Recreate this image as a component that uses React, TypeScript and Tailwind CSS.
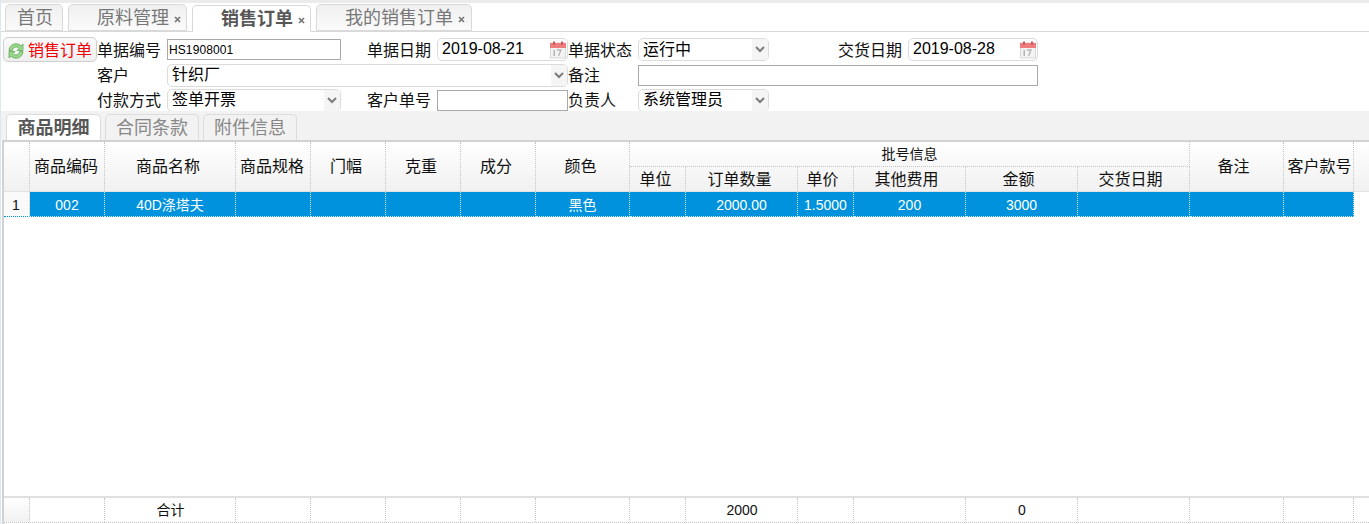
const FONT = "font-['Liberation_Sans','Noto_Sans_CJK_SC',sans-serif]";

function Close({ ml }: { ml: string }) {
  return (
    <svg width="7" height="7" viewBox="0 0 7 7" className={`mt-0.5 shrink-0 ${ml}`}>
      <path d="M1 1l5 5M6 1L1 6" stroke="#777" strokeWidth="1.7" />
    </svg>
  );
}

function Tab({ label, active, closeMl, w, pl, mr }: { label: string; active?: boolean; closeMl?: string; w: string; pl: string; mr: string }) {
  return (
    <div
      className={`flex h-[27px] items-center rounded-t-[5px] border border-[#d9d9d9] pt-0.5 text-[18px] ${w} ${pl} ${mr} ${
        active ? "-mb-px border-b-white bg-white font-bold text-[#575757]" : "bg-gradient-to-b from-[#f0f0f0] to-[#fafafa] text-[#777]"
      }`}
    >
      <span className="whitespace-nowrap">{label}</span>
      {closeMl && <Close ml={closeMl} />}
    </div>
  );
}

function Calendar() {
  return (
    <svg width="16" height="18" viewBox="0 0 16 18" className="shrink-0">
      <rect x="0.5" y="2" width="15" height="15" fill="#f3f3f3" stroke="#d8d8d8" />
      <rect x="0" y="2" width="16" height="5" fill="#ee7d7d" />
      <rect x="3" y="0.5" width="2" height="3.5" fill="#cc5a5a" />
      <rect x="11" y="0.5" width="2" height="3.5" fill="#cc5a5a" />
      <rect x="3.5" y="9" width="1.5" height="6" fill="#b5b5b5" />
      <path d="M7 9h4l-2.5 6" stroke="#b5b5b5" strokeWidth="1.3" fill="none" />
    </svg>
  );
}

function DateBox({ value }: { value: string }) {
  return (
    <div className="flex h-[23px] items-center justify-between self-center rounded-[5px] border border-[#dcdcdc] bg-white pl-1 pr-px text-[16px] text-black">
      <span className="-mt-0.5">{value}</span>
      <Calendar />
    </div>
  );
}

function SelectBox({ value, className = "" }: { value: string; className?: string }) {
  return (
    <div className={`flex h-[23px] items-center justify-between self-center overflow-hidden rounded-[5px] border border-[#dcdcdc] bg-white pl-1 text-[16px] text-black ${className}`}>
      <span>{value}</span>
      <div className="flex h-full w-4 items-center justify-center bg-[#f5f5f5]">
        <svg width="10" height="7" viewBox="0 0 10 7">
          <path d="M1 1l4 4 4-4" stroke="#7c7c7c" strokeWidth="2" fill="none" />
        </svg>
      </div>
    </div>
  );
}

function TextBox({ value = "", className = "" }: { value?: string; className?: string }) {
  return (
    <div className={`flex h-[21px] items-center self-center border border-[#a9a9a9] bg-white pl-px text-[12px] tracking-[0.1px] text-black ${className}`}>
      {value}
    </div>
  );
}

function Label({ children, right }: { children: string; right?: boolean }) {
  return <div className={`self-center whitespace-nowrap pt-0.5 text-[16px] text-[#111] ${right ? "pr-1.5 text-right" : ""}`}>{children}</div>;
}

function Refresh() {
  return (
    <svg width="16" height="16" viewBox="0 0 16 16" className="shrink-0">
      <path d="M1 7.5C1.3 3.2 4.500 0.800 8 0.800c2.300 0 3.900.9 4.900 2.200L15 1V7.500H9l2-2C10.300 4.600 9.300 4 8 4 6 4 4.700 5.400 4.300 7.500Z" fill="#9ad68b" stroke="#5fa955" strokeWidth="0.8" />
      <path d="M15 8.500C14.700 12.800 11.500 15.200 8 15.200c-2.300 0-3.900-.9-4.900-2.200L1 15V8.500h6l-2 2C5.700 11.400 6.700 12 8 12c2 0 3.300-1.400 3.700-3.500Z" fill="#9ad68b" stroke="#5fa955" strokeWidth="0.8" />
    </svg>
  );
}

const GRID = "grid grid-cols-[26px_75px_131px_75px_75px_75px_75px_94px_56px_112px_56px_112px_112px_112px_94px_70px_1fr]";
const cell = "border-r border-dotted border-[#c4c4c4]";

function Head({ children, className = "" }: { children?: string; className?: string }) {
  return <div className={`flex items-center justify-center whitespace-nowrap ${cell} ${className}`}>{children}</div>;
}

const rowValues = ["002", "40D涤塔夫", "", "", "", "", "黑色", "", "2000.00", "1.5000", "200", "3000", "", "", ""];
const footValues = ["", "合计", "", "", "", "", "", "", "2000", "", "", "0", "", "", ""];

export default function App() {
  return (
    <div className={`flex h-[524px] w-[1369px] flex-col overflow-hidden border-l border-[#dbe7f1] bg-white ${FONT}`}>
      <div className="h-[3px] shrink-0 bg-[#ebebeb]" />
      <div className="flex h-[29px] shrink-0 items-end border-b border-[#d9d9d9] pl-[4px]">
        <Tab label="首页" w="w-[58px]" pl="pl-[11px]" mr="mr-[5px]" />
        <Tab label="原料管理" closeMl="ml-[5px]" w="w-[119px]" pl="pl-[28px]" mr="mr-[5px]" />
        <Tab label="销售订单" closeMl="ml-[5px]" active w="w-[119px]" pl="pl-[28px]" mr="mr-[5px]" />
        <Tab label="我的销售订单" closeMl="ml-[5px]" w="w-[156px]" pl="pl-[28px]" mr="" />
      </div>

      <div className="grid h-[79px] shrink-0 grid-cols-[95px_70px_174px_96px_131px_70px_131px_139px_130px] grid-rows-[25px_26px_24px] items-center pl-px pt-[5px]">
        <div className="ml-px flex h-[25px] items-center gap-[4px] self-start rounded-[5px] border border-[#cfcfcf] bg-gradient-to-b from-[#fbfbfb] to-[#efefef] pl-[4px] pt-0.5 text-[16px] text-[#f00000]">
          <Refresh />
          <span className="whitespace-nowrap">销售订单</span>
        </div>
        <Label>单据编号</Label>
        <TextBox value="HS1908001" />
        <Label right>单据日期</Label>
        <DateBox value="2019-08-21" />
        <Label>单据状态</Label>
        <SelectBox value="运行中" />
        <Label right>交货日期</Label>
        <DateBox value="2019-08-28" />

        <div />
        <Label>客户</Label>
        <SelectBox value="针织厂" className="col-span-3" />
        <Label>备注</Label>
        <TextBox className="col-span-3" />

        <div />
        <Label>付款方式</Label>
        <SelectBox value="签单开票" />
        <Label right>客户单号</Label>
        <TextBox />
        <Label>负责人</Label>
        <SelectBox value="系统管理员" />
      </div>

      <div className="flex h-[29px] shrink-0 items-end bg-[#f2f2f2] pl-[5px]">
        <div className="flex h-[26px] w-[95px] items-center justify-center rounded-t-[5px] border border-b-0 border-[#dcdcdc] bg-white pt-0.5 text-[18px] font-bold text-[#575757]">商品明细</div>
        <div className="ml-[4px] flex h-[26px] w-[94px] items-center justify-center rounded-t-[5px] border border-b-0 border-[#dcdcdc] bg-[#f2f2f2] pt-0.5 text-[18px] text-[#888]">合同条款</div>
        <div className="ml-[4px] flex h-[26px] w-[94px] items-center justify-center rounded-t-[5px] border border-b-0 border-[#dcdcdc] bg-[#f2f2f2] pt-0.5 text-[18px] text-[#888]">附件信息</div>
      </div>

      <div className="ml-px flex min-h-0 flex-1 flex-col border-l-[2px] border-t-2 border-[#d2d2d2] text-[#111]">
        <div className={`${GRID} h-[50px] shrink-0 grid-rows-[25px_25px] border-b border-[#e2e2e2] bg-gradient-to-b from-[#ffffff] to-[#f1f1f1] text-[16px]`}>
          <Head className="row-span-2" />
          <Head className="row-span-2 pr-0.5">商品编码</Head>
          <Head className="row-span-2 pr-1">商品名称</Head>
          <Head className="row-span-2 pr-0.5">商品规格</Head>
          <Head className="row-span-2 pr-1">门幅</Head>
          <Head className="row-span-2 pr-1">克重</Head>
          <Head className="row-span-2 pr-1">成分</Head>
          <Head className="row-span-2 pr-1">颜色</Head>
          <Head className="col-span-6 border-b text-[14px]">批号信息</Head>
          <Head className="row-span-2 pr-1.5">备注</Head>
          <Head className="row-span-2 pl-0.5">客户款号</Head>
          <div className="row-span-2" />
          <Head className="pr-1">单位</Head>
          <Head className="pr-1">订单数量</Head>
          <Head className="pr-1.5">单价</Head>
          <Head className="pr-1.5">其他费用</Head>
          <Head className="pr-1.5">金额</Head>
          <Head className="pr-1.5">交货日期</Head>
        </div>

        <div className={`${GRID} h-[25px] shrink-0 text-[14px]`}>
          <div className={`flex items-center pl-2 pt-0.5 text-[14px] ${cell} border-b border-b-[#0092dc] bg-[#fafafa]`}>1</div>
          {rowValues.map((v, i) => (
            <div key={i} className="flex items-center justify-center whitespace-nowrap border-r border-b border-dotted border-r-[#cfe8f6] border-b-[#cfe8f6] bg-[#0092dc] pt-0.5 text-white">
              {v}
            </div>
          ))}
        </div>

        <div className="min-h-0 flex-1" />

        <div className={`${GRID} h-[27px] shrink-0 border-t-2 border-b border-[#e0e0e0] border-b-[#c8c8c8] text-[14px] [border-bottom-style:dotted]`}>
          <div className={`${cell} bg-gradient-to-b from-[#ffffff] to-[#f1f1f1]`} />
          {footValues.map((v, i) => (
            <div key={i} className={`flex items-center justify-center pl-px ${cell}`}>
              {v}
            </div>
          ))}
        </div>
        <div className="h-px shrink-0" />
      </div>
    </div>
  );
}
